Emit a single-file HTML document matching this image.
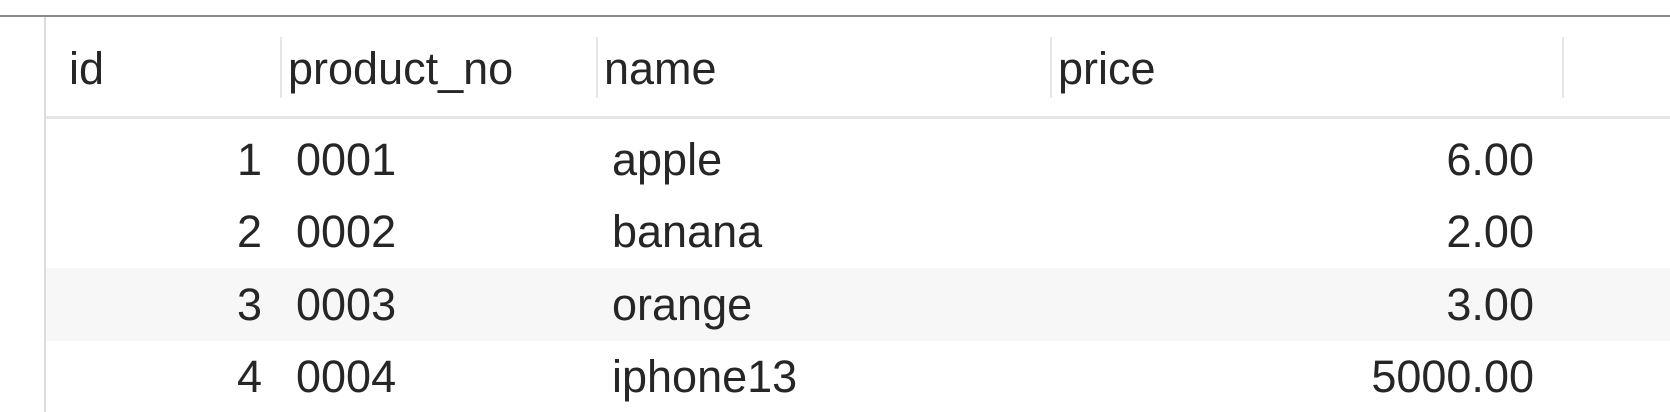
<!DOCTYPE html>
<html><head><meta charset="utf-8"><style>
body{margin:0;width:1670px;height:412px;background:#fff;overflow:hidden;position:relative;font-family:"Liberation Sans",Arial,sans-serif;color:#262626;font-size:45px}
.a{position:absolute;white-space:nowrap;line-height:1}
.r{text-align:right}
</style></head><body>
<div class="a" style="left:0;top:15px;width:1670px;height:2px;background:#8a8a8a"></div>
<div class="a" style="left:44px;top:17px;width:2px;height:395px;background:#dcdcdc"></div>
<div class="a" style="left:46px;top:116px;width:1624px;height:3px;background:#e6e6e6"></div>
<div class="a" style="left:46px;top:268px;width:1624px;height:73px;background:#f7f7f7"></div>
<div class="a" style="left:280px;top:37px;width:2px;height:61px;background:#e6e6e6"></div>
<div class="a" style="left:596px;top:37px;width:2px;height:61px;background:#e6e6e6"></div>
<div class="a" style="left:1050px;top:37px;width:2px;height:61px;background:#e6e6e6"></div>
<div class="a" style="left:1562px;top:37px;width:2px;height:61px;background:#e6e6e6"></div>
<div class="a" style="left:69px;top:46px">id</div>
<div class="a" style="left:288px;top:46px">product_no</div>
<div class="a" style="left:604px;top:46px">name</div>
<div class="a" style="left:1058px;top:46px">price</div>

<div class="a r" style="left:160px;width:102px;top:137px">1</div>
<div class="a" style="left:296px;top:137px">0001</div>
<div class="a" style="left:612px;top:137px">apple</div>
<div class="a r" style="left:1234px;width:300px;top:137px">6.00</div>

<div class="a r" style="left:160px;width:102px;top:209px">2</div>
<div class="a" style="left:296px;top:209px">0002</div>
<div class="a" style="left:612px;top:209px">banana</div>
<div class="a r" style="left:1234px;width:300px;top:209px">2.00</div>

<div class="a r" style="left:160px;width:102px;top:282px">3</div>
<div class="a" style="left:296px;top:282px">0003</div>
<div class="a" style="left:612px;top:282px">orange</div>
<div class="a r" style="left:1234px;width:300px;top:282px">3.00</div>

<div class="a r" style="left:160px;width:102px;top:354px">4</div>
<div class="a" style="left:296px;top:354px">0004</div>
<div class="a" style="left:612px;top:354px">iphone13</div>
<div class="a r" style="left:1234px;width:300px;top:354px">5000.00</div>
</body></html>
